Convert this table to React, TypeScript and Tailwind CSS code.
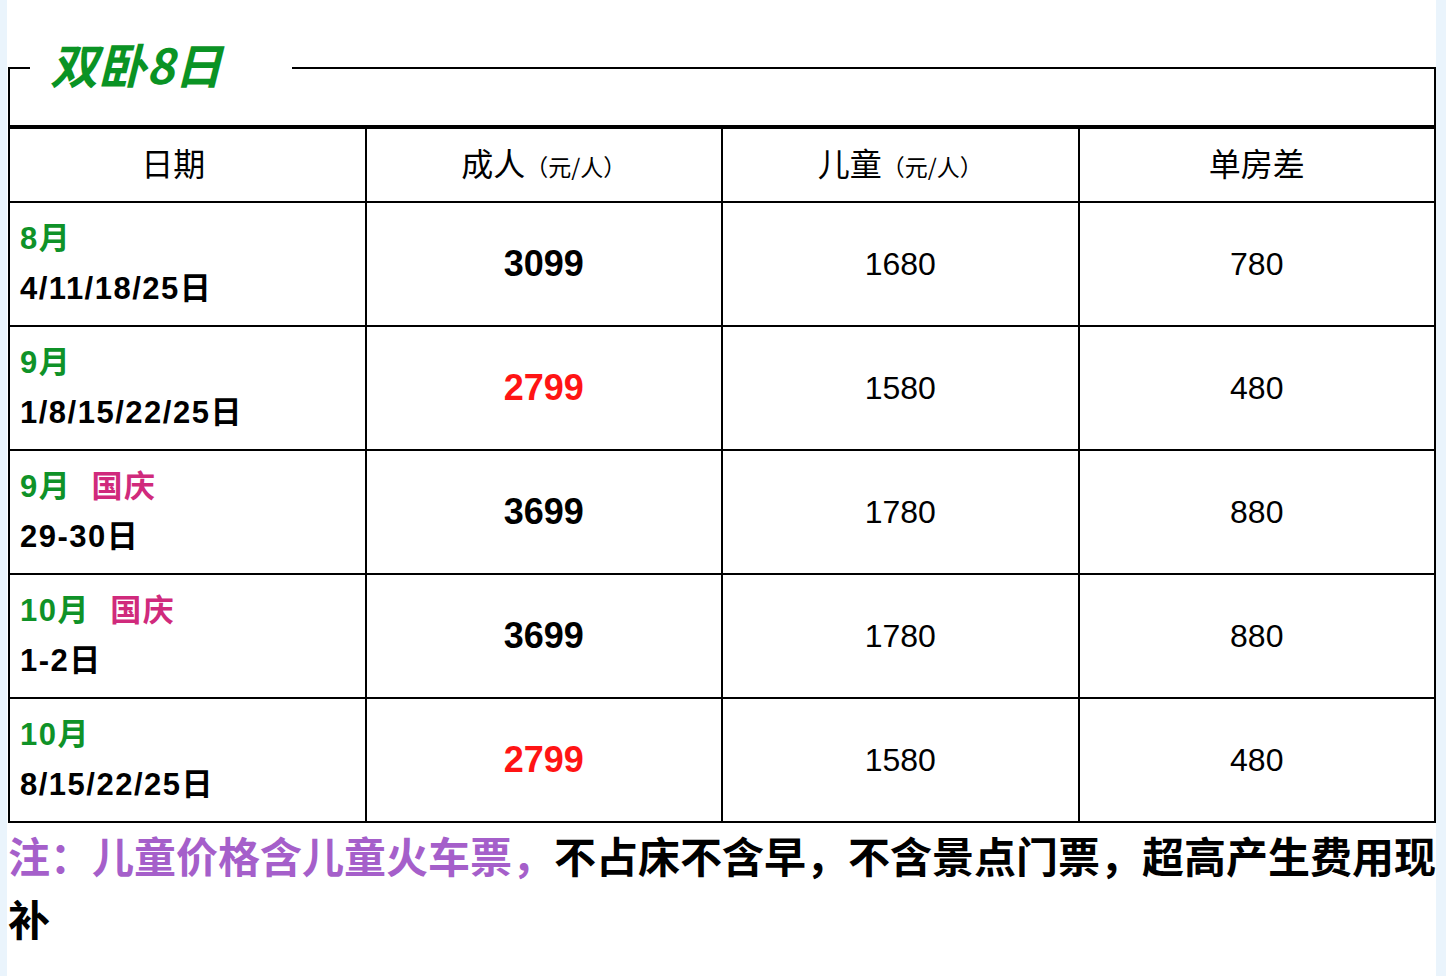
import React from "react";

type Row = {
  month: string;
  holiday?: string;
  days: string;
  adult: string;
  adultRed?: boolean;
  child: string;
  single: string;
};

const rows: Row[] = [
  { month: "8月", days: "4/11/18/25日", adult: "3099", child: "1680", single: "780" },
  { month: "9月", days: "1/8/15/22/25日", adult: "2799", adultRed: true, child: "1580", single: "480" },
  { month: "9月", holiday: "国庆", days: "29-30日", adult: "3699", child: "1780", single: "880" },
  { month: "10月", holiday: "国庆", days: "1-2日", adult: "3699", child: "1780", single: "880" },
  { month: "10月", days: "8/15/22/25日", adult: "2799", adultRed: true, child: "1580", single: "480" },
];

const cjk = "font-['Noto_Sans_CJK_SC',sans-serif]";
const latin = "font-['Liberation_Sans','Noto_Sans_CJK_SC',sans-serif]";

export default function App() {
  return (
    <div className="flex min-h-screen bg-[#eaf4fc]">
      <div className="ml-[7px] min-h-screen w-[1429px] bg-white pl-[1px] pt-[40px]">
        {/* 标题框 */}
        <fieldset className="m-0 w-[1428px] border-x-2 border-t-2 border-b-0 border-black p-0">
          <legend
            className={`ml-[20px] pb-[10px] pl-[20px] pr-[70px] text-[48px] leading-[46px] font-bold italic text-[#0a9324] ${cjk}`}
          >
            双卧8日
          </legend>
          <div className="h-[29px]" />
        </fieldset>

        <table className="w-[1428px] table-fixed border-collapse text-black">
          <thead>
            <tr className="h-[75px]">
              <th className={`border-2 border-t-4 border-black pr-[28px] pb-[6px] text-[32px] font-normal ${cjk}`}>
                日期
              </th>
              <th className={`border-2 border-t-4 border-black pb-[6px] text-[32px] font-normal ${cjk}`}>
                成人<span className="text-[23px]">（元/人）</span>
              </th>
              <th className={`border-2 border-t-4 border-black pb-[6px] text-[32px] font-normal ${cjk}`}>
                儿童<span className="text-[23px]">（元/人）</span>
              </th>
              <th className={`border-2 border-t-4 border-black pb-[6px] text-[32px] font-normal ${cjk}`}>
                单房差
              </th>
            </tr>
          </thead>
          <tbody>
            {rows.map((r, i) => (
              <tr key={i} className="h-[124px]">
                <td
                  className={`border-2 border-black pl-[10px] text-[31px] leading-[50px] font-bold tracking-[1.5px] ${latin}`}
                >
                  <div>
                    <span className="text-[#0f9228]">{r.month}</span>
                    {r.holiday && (
                      <span className="text-[#d02a7c]">{"\u00a0\u00a0"}{r.holiday}</span>
                    )}
                  </div>
                  <div>{r.days}</div>
                </td>
                <td
                  className={`border-2 border-black text-center text-[36px] font-bold ${latin} ${
                    r.adultRed ? "text-[#ff1414]" : "text-black"
                  }`}
                >
                  {r.adult}
                </td>
                <td className={`border-2 border-black text-center text-[32px] ${latin}`}>{r.child}</td>
                <td className={`border-2 border-black text-center text-[32px] ${latin}`}>{r.single}</td>
              </tr>
            ))}
          </tbody>
        </table>

        {/* 备注 */}
        <p className={`w-[1434px] text-[42px] leading-[63px] font-bold text-black ${cjk}`}>
          <span className="text-[#a55fca]">注：儿童价格含儿童火车票，</span>
          不占床不含早，不含景点门票，超高产生费用现补
        </p>
      </div>
    </div>
  );
}
